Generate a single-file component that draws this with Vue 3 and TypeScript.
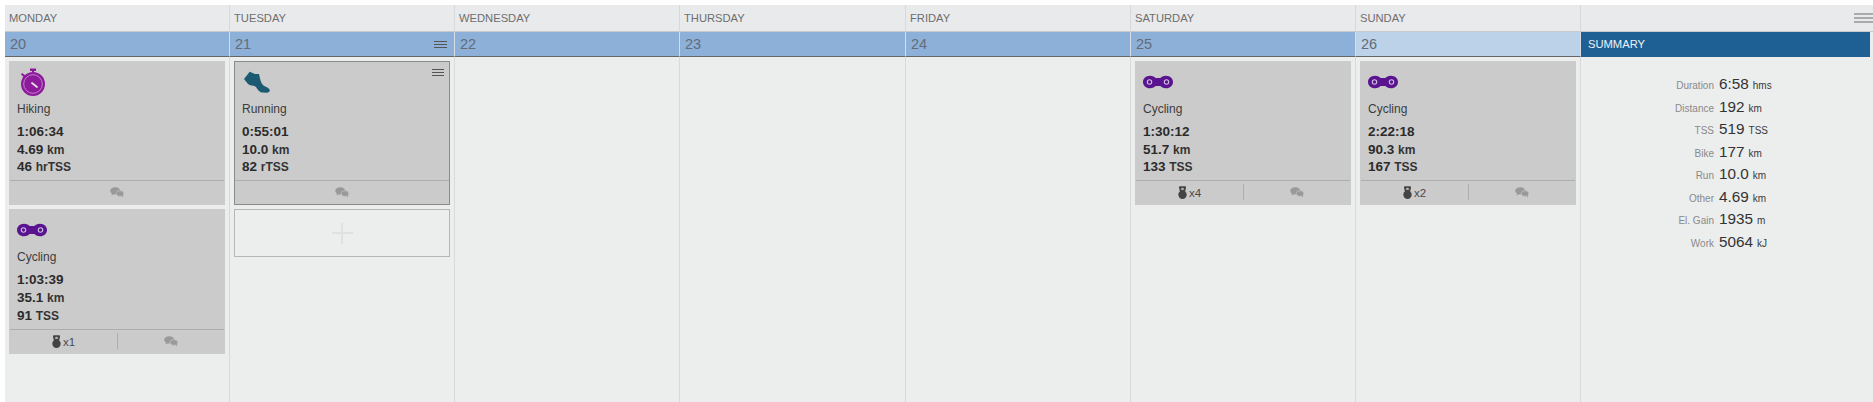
<script setup lang="ts">
type Kind = 'watch' | 'shoe' | 'chain'
interface Workout { kind: Kind; name: string; time: string; dist: string; load: string; loadUnit: string; bells?: string; selected?: boolean }
interface Day { name: string; date: number; menu?: boolean; today?: boolean; add?: boolean; workouts: Workout[] }

const days: Day[] = [
  { name: 'Monday', date: 20, workouts: [
    { kind: 'watch', name: 'Hiking', time: '1:06:34', dist: '4.69', load: '46', loadUnit: 'hrTSS' },
    { kind: 'chain', name: 'Cycling', time: '1:03:39', dist: '35.1', load: '91', loadUnit: 'TSS', bells: 'x1' },
  ] },
  { name: 'Tuesday', date: 21, menu: true, add: true, workouts: [
    { kind: 'shoe', name: 'Running', time: '0:55:01', dist: '10.0', load: '82', loadUnit: 'rTSS', selected: true },
  ] },
  { name: 'Wednesday', date: 22, workouts: [] },
  { name: 'Thursday', date: 23, workouts: [] },
  { name: 'Friday', date: 24, workouts: [] },
  { name: 'Saturday', date: 25, workouts: [
    { kind: 'chain', name: 'Cycling', time: '1:30:12', dist: '51.7', load: '133', loadUnit: 'TSS', bells: 'x4' },
  ] },
  { name: 'Sunday', date: 26, today: true, workouts: [
    { kind: 'chain', name: 'Cycling', time: '2:22:18', dist: '90.3', load: '167', loadUnit: 'TSS', bells: 'x2' },
  ] },
]

const summary = [
  ['Duration', '6:58', 'hms'], ['Distance', '192', 'km'], ['TSS', '519', 'TSS'], ['Bike', '177', 'km'],
  ['Run', '10.0', 'km'], ['Other', '4.69', 'km'], ['El. Gain', '1935', 'm'], ['Work', '5064', 'kJ'],
]
</script>

<template>
  <div class="calendar">
    <div v-for="d in days" :key="'h' + d.date" class="head-cell">{{ d.name }}</div>
    <div class="head-cell head-last"><span class="head-menu"><i></i><i></i><i></i></span></div>

    <div v-for="d in days" :key="'d' + d.date" class="date-cell" :class="{ today: d.today }">
      <span>{{ d.date }}</span>
      <span v-if="d.menu" class="menu date-menu"><i></i><i></i><i></i></span>
    </div>
    <div class="summary-title-wrap"><div class="summary-title">SUMMARY</div></div>

    <div v-for="d in days" :key="'b' + d.date" class="day">
      <article v-for="w in d.workouts" :key="w.time" class="card" :class="{ selected: w.selected }">
        <span v-if="w.selected" class="menu card-menu"><i></i><i></i><i></i></span>
        <div class="icon">
          <svg v-if="w.kind === 'watch'" width="30" height="30" viewBox="0 0 30 30">
            <rect x="13" y="1.500" width="6" height="2.500" fill="#8c1a9b" />
            <rect x="15" y="3.500" width="2" height="2" fill="#8c1a9b" />
            <path d="M5 6l3.500 2.600-1.500 1.600L4 7.500z" fill="#8c1a9b" />
            <circle cx="16" cy="17" r="12" fill="#8c1a9b" />
            <circle cx="16" cy="17" r="9.300" fill="none" stroke="#c98fd0" stroke-width=".9" />
            <path d="M15 16l5 4" stroke="#eadcec" stroke-width="1.800" stroke-linecap="round" />
          </svg>
          <svg v-else-if="w.kind === 'shoe'" width="30" height="30" viewBox="0 0 30 30">
            <path d="M2 12L7.700 4.700L13 7L17 7C18 12 19 16 21 18C23 20 27 20.500 27.800 23C28 25 26.500 25.700 25 25.700L20 25.500C16.500 25 15 21 13.700 19.700C11 18 8 19 6 17Z" fill="#1c5a72" />
          </svg>
          <svg v-else width="30" height="30" viewBox="0 0 30 30">
            <path d="M7 8.700c2.900 0 4.600 1.300 5.600 2.300h4.800c1-1 2.700-2.300 5.600-2.300 4 0 7 2.800 7 6.300s-3 6.300-7 6.300c-2.900 0-4.600-1.300-5.600-2.300h-4.800c-1 1-2.700 2.300-5.600 2.300-4 0-7-2.800-7-6.300s3-6.300 7-6.300z" fill="#5a148f" />
            <circle cx="6.500" cy="15" r="2.200" fill="none" stroke="#cdbfe0" stroke-width="1.100" />
            <circle cx="23.500" cy="15" r="2.200" fill="none" stroke="#cdbfe0" stroke-width="1.100" />
          </svg>
        </div>
        <div class="wname">{{ w.name }}</div>
        <div class="metrics">
          <div>{{ w.time }}</div>
          <div>{{ w.dist }} <small>km</small></div>
          <div>{{ w.load }} <small>{{ w.loadUnit }}</small></div>
        </div>
        <footer class="foot">
          <div v-if="w.bells" class="foot-cell bells">
            <svg width="9" height="13" viewBox="0 0 9 13">
              <path d="M2 .3C1.200.3.800 1 1 1.800L2 6h5l1-4.200C8.200 1 7.800.3 7 .3z" fill="#444" />
              <ellipse cx="4.500" cy="2.900" rx="1.400" ry="1.200" fill="#b4b4b4" />
              <circle cx="4.500" cy="8.700" r="4.200" fill="#444" />
            </svg>
            <span>{{ w.bells }}</span>
          </div>
          <div class="foot-cell">
            <svg width="14" height="11" viewBox="0 0 14 11">
              <ellipse cx="5.200" cy="3.800" rx="5" ry="3.600" fill="#999" />
              <path d="M2 6l-.5 2.500L4.500 7z" fill="#999" />
              <ellipse cx="10" cy="6.500" rx="3.800" ry="2.900" fill="#999" stroke="#ccc" stroke-width=".6" />
              <path d="M11.500 8.500l1.500 2-.1-2.600z" fill="#999" />
            </svg>
          </div>
        </footer>
      </article>
      <div v-if="d.add" class="add"><span class="plus"></span></div>
    </div>

    <div class="summary">
      <div v-for="s in summary" :key="s[0]" class="sum-row">
        <span class="sum-label">{{ s[0] }}</span>
        <span class="sum-value">{{ s[1] }}</span>
        <span class="sum-unit">{{ s[2] }}</span>
      </div>
    </div>
  </div>
</template>

<style>
html, body { margin: 0; background: #fff; }
</style>

<style scoped>
.calendar {
  box-sizing: border-box;
  width: 1873px;
  height: 402px;
  padding: 5px 0 0 5px;
  display: grid;
  grid-template-columns: 225px 225px 225px 226px 225px 225px 225px 1fr;
  grid-template-rows: 27px 25px 1fr;
  font-family: "Liberation Sans", Arial, sans-serif;
  overflow: hidden;
}
.head-cell {
  box-sizing: border-box;
  background: #e9eaec;
  border-right: 1px solid #d8d9db;
  border-bottom: 1px solid #c8c9cb;
  padding: 0 0 0 4px;
  font-size: 11.200px;
  line-height: 26px;
  text-transform: uppercase;
  color: #6e6e6e;
}
.head-last { border-right: 0; display: flex; justify-content: flex-end; align-items: center; padding: 0; }
.head-menu { display: flex; flex-direction: column; gap: 2px; width: 19px; margin-top: -1px; }
.head-menu i { display: block; height: 2px; background: #aaa; }
.date-cell {
  box-sizing: border-box;
  background: #8db0d8;
  border-right: 1px solid #d6dde6;
  border-bottom: 1px solid #666;
  padding: 0 7px 0 5px;
  font-size: 14.500px;
  line-height: 24px;
  color: #636c78;
  display: flex;
  justify-content: space-between;
  align-items: center;
}
.date-cell.today { background: #bcd2e8; }
.menu { display: flex; flex-direction: column; gap: 2px; width: 13px; }
.menu i { display: block; height: 1px; background: #555; }
.summary-title-wrap { background: #eceded; padding-right: 3px; }
.summary-title {
  height: 25px;
  background: #1f6094;
  color: #eef3f7;
  font-size: 11.200px;
  line-height: 25px;
  padding-left: 7px;
}
.day {
  box-sizing: border-box;
  background: #eceded;
  border-right: 1px solid #d8d9db;
  padding: 4px 4px 0;
  display: flex;
  flex-direction: column;
  gap: 4px;
}
.card {
  position: relative;
  box-sizing: border-box;
  width: 216px;
  background: #cbcbcb;
  border: 1px solid #cbcbcb;
  padding: 5px 0 0;
}
.card.selected { border-color: #8a8a8a; }
.card-menu { position: absolute; top: 7px; right: 5px; width: 12px; gap: 2px; }
.icon { width: 30px; height: 30px; margin-left: 7px; }
.icon svg { display: block; }
.wname { margin: 4px 0 0 7px; font-size: 12px; line-height: 16px; color: #3c3c3c; }
.metrics { margin: 6px 0 0 7px; font-size: 13.500px; line-height: 17.600px; font-weight: 700; color: #2b2b2b; }
.metrics small { font-size: 12px; line-height: 1; color: #333; }
.foot { display: flex; margin: 4.600px 0 0; height: 23px; border-top: 1px solid #aeaeae; }
.foot-cell { flex: 1; display: flex; justify-content: center; align-items: center; gap: 2px; }
.foot-cell + .foot-cell { position: relative; }
.foot-cell + .foot-cell::before { content: ""; position: absolute; left: 0; top: 3px; height: 16px; width: 1px; background: #aeaeae; }
.bells { font-size: 11.500px; color: #4a4a4a; padding-top: 1px; }
.bells svg { margin-top: -1px; }
.add {
  box-sizing: border-box;
  width: 216px;
  height: 48px;
  border: 1px solid #b6b6b6;
  display: flex;
  justify-content: center;
  align-items: center;
}
.plus { position: relative; width: 21px; height: 2px; background: #e0dfe1; }
.plus::after { content: ""; position: absolute; left: 9.500px; top: -9.500px; width: 2px; height: 21px; background: #e0dfe1; }
.summary { background: #eceded; padding-top: 16px; }
.sum-row {
  display: grid;
  grid-template-columns: 133px max-content 1fr;
  align-items: baseline;
  height: 22.500px;
  line-height: 22.500px;
}
.sum-label { text-align: right; font-size: 10px; color: #8a8a8a; }
.sum-value { margin-left: 5px; font-size: 15.300px; color: #333; }
.sum-unit { margin-left: 4px; font-size: 10px; color: #3a3a3a; }
</style>
